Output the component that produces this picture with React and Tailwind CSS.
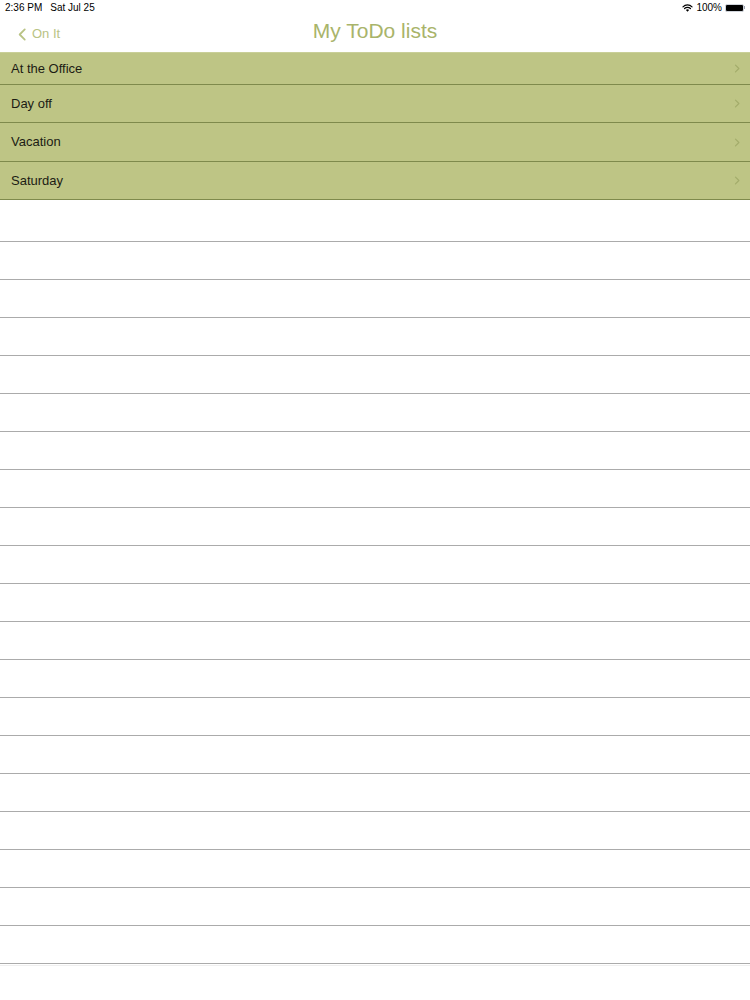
import React from 'react';

const lists = [
  { label: 'At the Office', h: 'h-[32px]' },
  { label: 'Day off', h: 'h-[38px]' },
  { label: 'Vacation', h: 'h-[39px]' },
  { label: 'Saturday', h: 'h-[38px]' },
];

const Chevron = ({ className, left }) => (
  <svg viewBox="0 0 8 12" className={className} fill="none">
    <path d={left ? 'M6 1.5 L1.5 6 L6 10.5' : 'M2 1.5 L6.5 6 L2 10.5'} stroke="currentColor" strokeWidth="1.6" strokeLinecap="round" strokeLinejoin="round" />
  </svg>
);

const StatusBar = () => (
  <div className="h-[15px] px-[5px] flex items-center justify-between text-[10px] text-black">
    <div className="flex gap-[8px]">
      <span>2:36 PM</span>
      <span>Sat Jul 25</span>
    </div>
    <div className="flex items-center gap-[3px]">
      <svg viewBox="0 0 16 12" className="w-[11px] h-[8px]">
        <path d="M8 11.5 L5.6 8.9 A3.4 3.4 0 0 1 10.4 8.9 Z" fill="black" />
        <path d="M3.6 6.8 A6.2 6.2 0 0 1 12.4 6.8" stroke="black" strokeWidth="1.8" fill="none" strokeLinecap="round" />
        <path d="M1.2 4.2 A9.6 9.6 0 0 1 14.8 4.2" stroke="black" strokeWidth="1.8" fill="none" strokeLinecap="round" />
      </svg>
      <span>100%</span>
      <div className="flex items-center">
        <div className="w-[19px] h-[8px] rounded-[2px] bg-black border border-gray-300" />
        <div className="w-[1px] h-[3px] bg-gray-400" />
      </div>
    </div>
  </div>
);

const NavBar = () => (
  <div className="h-[37px] relative flex items-center">
    <div className="flex items-center pl-[18px] pt-[1px] text-[#b9c384] text-[13px]">
      <Chevron left className="w-[9px] h-[15px] mr-[5px] text-[#b9c384]" />
      <span>On It</span>
    </div>
    <div className="absolute inset-0 flex items-center justify-center pb-[5px] text-[21px] text-[#a9b46a]">
      My ToDo lists
    </div>
  </div>
);

export default function App() {
  return (
    <div className="w-[750px] h-[1000px] bg-white overflow-hidden" style={{ fontFamily: '"Liberation Sans", Arial, sans-serif' }}>
      <StatusBar />
      <NavBar />
      <div className="bg-[#bec585] border-t border-[#c9cf98]">
        {lists.map((item) => (
          <div key={item.label} className={`${item.h} flex items-center justify-between pl-[11px] pr-[10px] border-b border-[#7f8a4c]`}>
            <span className="text-[13px] text-[#1c1c14]">{item.label}</span>
            <Chevron className="w-[6px] h-[9px] text-[#a3ac6b]" />
          </div>
        ))}
      </div>
      <div className="h-[42px] border-b border-[#ababab]" />
      {Array.from({ length: 19 }).map((_, i) => (
        <div key={i} className="h-[38px] border-b border-[#ababab]" />
      ))}
      <div className="h-[2px] border-b border-[#efefef]" />
    </div>
  );
}
